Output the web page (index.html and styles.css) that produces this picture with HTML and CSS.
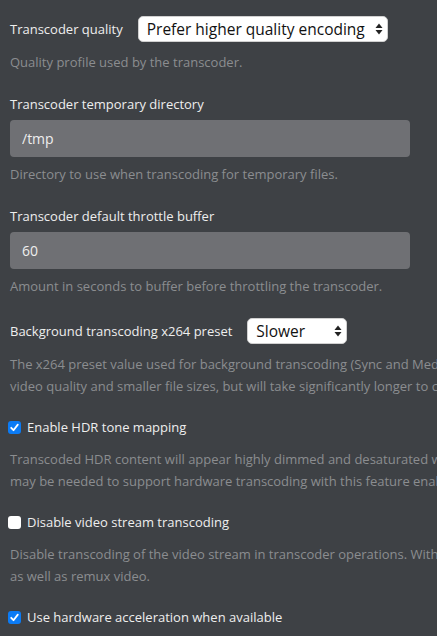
FILE: index.html
```html
<!DOCTYPE html>
<html lang="en">
  <head>
    <meta charset="UTF-8" />
    <meta name="viewport" content="width=device-width, initial-scale=1.0" />
    <title>Transcoder settings</title>
    <link rel="stylesheet" href="styles.css">
  </head>
  <body>
    <div class="settings">
      <div class="setting">
        <div class="inline-row">
          <label class="setting-label" for="quality">Transcoder quality</label>
          <span class="select-wrap">
            <select class="select select-wide" id="quality">
              <option>Prefer higher quality encoding</option>
            </select>
            <svg class="select-arrows" width="8" height="12" viewBox="0 0 8 12">
              <path d="M4 0.5 L7.5 5 L0.5 5 Z" fill="#222" />
              <path d="M4 11.5 L7.5 7 L0.5 7 Z" fill="#222" />
            </svg>
          </span>
        </div>
        <p class="setting-desc">Quality profile used by the transcoder.</p>
      </div>

      <div class="setting">
        <label class="setting-label block" for="tmpdir">Transcoder temporary directory</label>
        <input class="text-input" id="tmpdir" type="text" value="/tmp" />
        <p class="setting-desc">Directory to use when transcoding for temporary files.</p>
      </div>

      <div class="setting">
        <label class="setting-label block" for="throttle">Transcoder default throttle buffer</label>
        <input class="text-input" id="throttle" type="text" value="60" />
        <p class="setting-desc">Amount in seconds to buffer before throttling the transcoder.</p>
      </div>

      <div class="setting">
        <div class="inline-row">
          <label class="setting-label" for="preset">Background transcoding x264 preset</label>
          <span class="select-wrap">
            <select class="select select-narrow" id="preset">
              <option>Slower</option>
            </select>
            <svg class="select-arrows" width="8" height="12" viewBox="0 0 8 12">
              <path d="M4 0.5 L7.5 5 L0.5 5 Z" fill="#222" />
              <path d="M4 11.5 L7.5 7 L0.5 7 Z" fill="#222" />
            </svg>
          </span>
        </div>
        <p class="setting-desc">
          The x264 preset value used for background transcoding (Sync and Media Optimizer). Slower values will result in better<br />
          video quality and smaller file sizes, but will take significantly longer to complete processing.
        </p>
      </div>

      <div class="setting">
        <label class="check-row">
          <span class="check checked">
            <svg width="13" height="13" viewBox="0 0 13 13">
              <path d="M3.2 6.8 L5.5 9.2 L9.8 3.6" fill="none" stroke="#fff" stroke-width="1.8" stroke-linecap="round" stroke-linejoin="round" />
            </svg>
          </span>
          <span class="check-label">Enable HDR tone mapping</span>
        </label>
        <p class="setting-desc">
          Transcoded HDR content will appear highly dimmed and desaturated without tone mapping. Newer hardware<br />
          may be needed to support hardware transcoding with this feature enabled.
        </p>
      </div>

      <div class="setting">
        <label class="check-row">
          <span class="check"></span>
          <span class="check-label">Disable video stream transcoding</span>
        </label>
        <p class="setting-desc">
          Disable transcoding of the video stream in transcoder operations. Without video transcoding, the server will only direct stream<br />
          as well as remux video.
        </p>
      </div>

      <div class="setting">
        <label class="check-row">
          <span class="check checked">
            <svg width="13" height="13" viewBox="0 0 13 13">
              <path d="M3.2 6.8 L5.5 9.2 L9.8 3.6" fill="none" stroke="#fff" stroke-width="1.8" stroke-linecap="round" stroke-linejoin="round" />
            </svg>
          </span>
          <span class="check-label">Use hardware acceleration when available</span>
        </label>
      </div>
    </div>
  </body>
</html>
```

FILE: styles.css
```css
html,
body {
  overflow: hidden;
}
body {
  font-family: "Open Sans", "Noto Sans", sans-serif;
  margin: 0;
  padding: 16px 0 0 10px;
  background-color: #3e4145;
  color: #ececec;
  height: 100vh;
  box-sizing: border-box;
}
.settings {
  width: 900px;
}
.setting {
  margin-bottom: 21px;
}
.setting-label {
  font-size: 13px;
  line-height: 20px;
  color: #eeeeee;
}
.setting-label.block {
  display: block;
  margin-bottom: 6px;
}
.inline-row {
  display: flex;
  align-items: center;
  gap: 15px;
  height: 26px;
  margin-bottom: 9px;
}
.select-wrap {
  position: relative;
  display: inline-block;
}
.select {
  appearance: none;
  -webkit-appearance: none;
  font-family: inherit;
  font-size: 15.5px;
  height: 26px;
  padding: 0 12px 0 8px;
  border: 1px solid #d0d0d0;
  border-radius: 5px;
  background-color: #ffffff;
  color: #111;
  box-sizing: border-box;
}
.select-wide {
  width: 250px;
}
.select-narrow {
  width: 100px;
}
.select-arrows {
  position: absolute;
  right: 5px;
  top: 7px;
  pointer-events: none;
}
.text-input {
  display: block;
  width: 400px;
  height: 37px;
  box-sizing: border-box;
  padding: 0 12px;
  border: none;
  border-radius: 4px;
  background-color: #6f7074;
  color: #eeeeee;
  font-family: inherit;
  font-size: 14px;
  margin-bottom: 6px;
}
.setting-desc {
  margin: 0;
  font-size: 13px;
  line-height: 22px;
  color: #8b8d90;
  white-space: nowrap;
}
.check-row {
  display: flex;
  align-items: center;
  gap: 6px;
  height: 18px;
  margin-left: -2px;
  margin-bottom: 12px;
}
.check {
  width: 13px;
  height: 13px;
  border-radius: 3px;
  background-color: #ffffff;
  display: inline-flex;
}
.check.checked {
  background-color: #0b7bf5;
}
.check-label {
  font-size: 13px;
  color: #eeeeee;
}
```
